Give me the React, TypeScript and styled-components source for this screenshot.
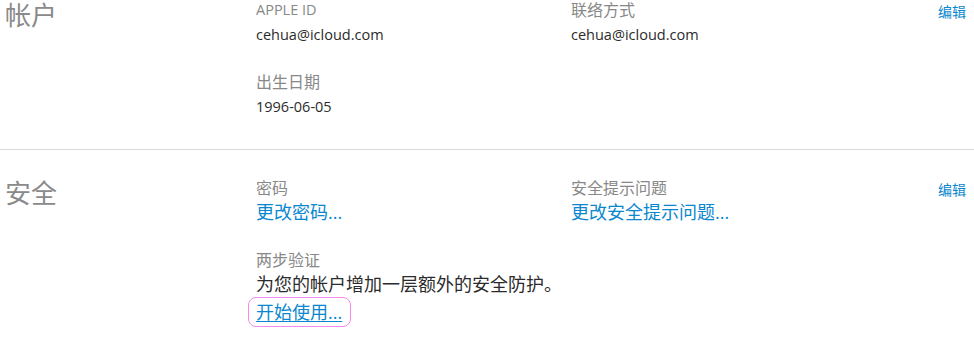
import React from 'react';
import styled, { createGlobalStyle } from 'styled-components';

const GlobalStyle = createGlobalStyle`
  html, body {
    margin: 0;
    padding: 0;
    background: #ffffff;
  }
  body {
    font-family: "Open Sans", "Noto Sans CJK SC", sans-serif;
    overflow: hidden;
  }
`;

// the page is scrolled a little, so the first section starts above the window
const Page = styled.div`
  width: 974px;
  margin-top: -28px;
`;

const Section = styled.section<{ $divided?: boolean }>`
  display: grid;
  grid-template-columns: 256px 1fr auto;
  padding: ${(props) => (props.$divided ? '26px 8px 32px 0' : '26px 8px 30px 0')};
  border-top: ${(props) => (props.$divided ? '1px solid #dadada' : 'none')};
`;

const Heading = styled.h2`
  margin: 0;
  padding: 3px 0 0 5px;
  font-size: 26px;
  line-height: 26px;
  font-weight: 400;
  color: #8a8a8a;
  font-family: "Noto Sans CJK SC", sans-serif;
`;

const Fields = styled.div`
  display: grid;
  grid-template-columns: 315px 1fr;
  row-gap: 23px;
`;

const Field = styled.div<{ $wide?: boolean }>`
  grid-column: ${(props) => (props.$wide ? '1 / span 2' : 'auto')};
`;

const Label = styled.div<{ $latin?: boolean }>`
  font-size: ${(props) => (props.$latin ? '14.5px' : '16px')};
  line-height: 24px;
  color: #888888;
`;

const Value = styled.div<{ $latin?: boolean }>`
  font-size: ${(props) => (props.$latin ? '14.5px' : '18px')};
  line-height: 25px;
  color: #2b2b2b;
`;

const LinkText = styled.a<{ $focused?: boolean }>`
  display: inline-block;
  font-size: 18px;
  line-height: 25px;
  color: #0a87cf;
  cursor: pointer;
  text-decoration: ${(props) => (props.$focused ? 'underline' : 'none')};
  text-underline-offset: 2px;
  ${(props) =>
    props.$focused &&
    `
    margin: 0 0 0 -8px;
    padding: 2px 8px 1px 7px;
    border: 1.5px solid #f48af0;
    border-radius: 8px;
  `}
`;

const EditLink = styled.a`
  margin-top: 4px;
  font-size: 14px;
  line-height: 20px;
  color: #0a87cf;
  cursor: pointer;
`;

export default function App() {
  return (
    <Page>
      <GlobalStyle />
      <Section>
        <Heading>帐户</Heading>
        <Fields>
          <Field>
            <Label $latin>APPLE ID</Label>
            <Value $latin>cehua@icloud.com</Value>
          </Field>
          <Field>
            <Label>联络方式</Label>
            <Value $latin>cehua@icloud.com</Value>
          </Field>
          <Field $wide>
            <Label>出生日期</Label>
            <Value $latin>1996-06-05</Value>
          </Field>
        </Fields>
        <EditLink>编辑</EditLink>
      </Section>
      <Section $divided>
        <Heading>安全</Heading>
        <Fields>
          <Field>
            <Label>密码</Label>
            <LinkText>更改密码...</LinkText>
          </Field>
          <Field>
            <Label>安全提示问题</Label>
            <LinkText>更改安全提示问题...</LinkText>
          </Field>
          <Field $wide>
            <Label>两步验证</Label>
            <Value>为您的帐户增加一层额外的安全防护。</Value>
            <LinkText $focused>开始使用...</LinkText>
          </Field>
        </Fields>
        <EditLink>编辑</EditLink>
      </Section>
    </Page>
  );
}
